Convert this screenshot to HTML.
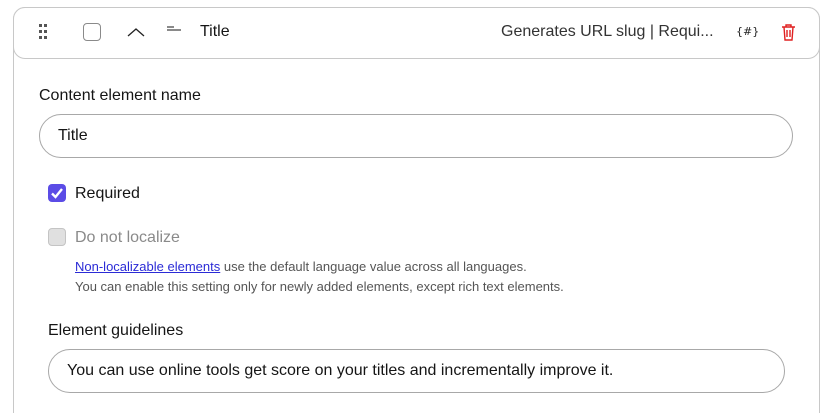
<!DOCTYPE html>
<html style="width:833px;height:413px;overflow:hidden"><head><meta charset="utf-8"><style>
*{box-sizing:border-box;margin:0;padding:0}
body{width:833px;height:413px;background:#fff;font-family:"Liberation Sans",sans-serif;color:#151515;position:relative;overflow:hidden}
.outer{position:absolute;left:13px;top:7px;width:807px;height:420px;border:1px solid #c8c8c8;border-radius:12px}
.head{position:absolute;left:13px;top:7px;width:807px;height:52px;border:1px solid #c8c8c8;border-radius:12px;background:#fff}
.abs{position:absolute}
.input{position:absolute;border:1px solid #a8a8a8;border-radius:22px;font-size:16px;padding-left:18px;line-height:41px;background:#fff}
.lbl{position:absolute;font-size:16px}
.small{position:absolute;font-size:13px;color:#555}
</style></head><body>
<div class="outer"></div>
<div class="head"></div>
<svg class="abs" style="left:38px;top:23px" width="12" height="18">
<g fill="#555"><rect x="1" y="1" width="3" height="3"/><rect x="6" y="1" width="3" height="3"/><rect x="1" y="7" width="3" height="3"/><rect x="6" y="7" width="3" height="3"/><rect x="1" y="13" width="3" height="3"/><rect x="6" y="13" width="3" height="3"/></g></svg>
<div class="abs" style="left:83px;top:23px;width:18px;height:18px;border:1px solid #8a8a8a;border-radius:4px"></div>
<svg class="abs" style="left:126px;top:26px" width="20" height="12"><path d="M2 10 L10 3 L18 10" fill="none" stroke="#222" stroke-width="1.3"/></svg>
<svg class="abs" style="left:166px;top:25px" width="18" height="8"><path d="M1 2H8M1 5H15" stroke="#444" stroke-width="1.2"/></svg>
<div class="lbl" style="left:200px;top:23px">Title</div>
<div class="lbl" style="left:501px;top:23px;color:#333">Generates URL slug | Requi...</div>
<div class="abs" style="left:736px;top:25px;font-size:11px;color:#222;font-family:'DejaVu Sans',sans-serif">{#}</div>
<svg class="abs" style="left:780px;top:23px" width="17" height="19"><g fill="none" stroke="#e02020" stroke-width="1.4"><path d="M2 4H15M6 4V2H11V4M4 4L5 17H12L13 4M7 7V14M10 7V14"/></g></svg>
<div class="lbl" style="left:39px;top:87px">Content element name</div>
<div class="input" style="left:39px;top:114px;width:754px;height:44px">Title</div>
<div class="abs" style="left:48px;top:184px;width:18px;height:18px;background:#5b4ce6;border-radius:4px"><svg width="18" height="18"><path d="M4 9.5L7.5 13L14 5" fill="none" stroke="#fff" stroke-width="2.4"/></svg></div>
<div class="lbl" style="left:75px;top:185px">Required</div>
<div class="abs" style="left:48px;top:228px;width:18px;height:18px;background:#e0e0e0;border:1px solid #c4c4c4;border-radius:4px"></div>
<div class="lbl" style="left:75px;top:229px;color:#8a8a8a">Do not localize</div>
<div class="small" style="left:75px;top:259px"><span style="color:#2b2bd6;text-decoration:underline">Non-localizable elements</span> use the default language value across all languages.</div>
<div class="small" style="left:75px;top:279px">You can enable this setting only for newly added elements, except rich text elements.</div>
<div class="lbl" style="left:48px;top:322px">Element guidelines</div>
<div class="input" style="left:48px;top:349px;width:737px;height:44px">You can use online tools get score on your titles and incrementally improve it.</div>
</body></html>
